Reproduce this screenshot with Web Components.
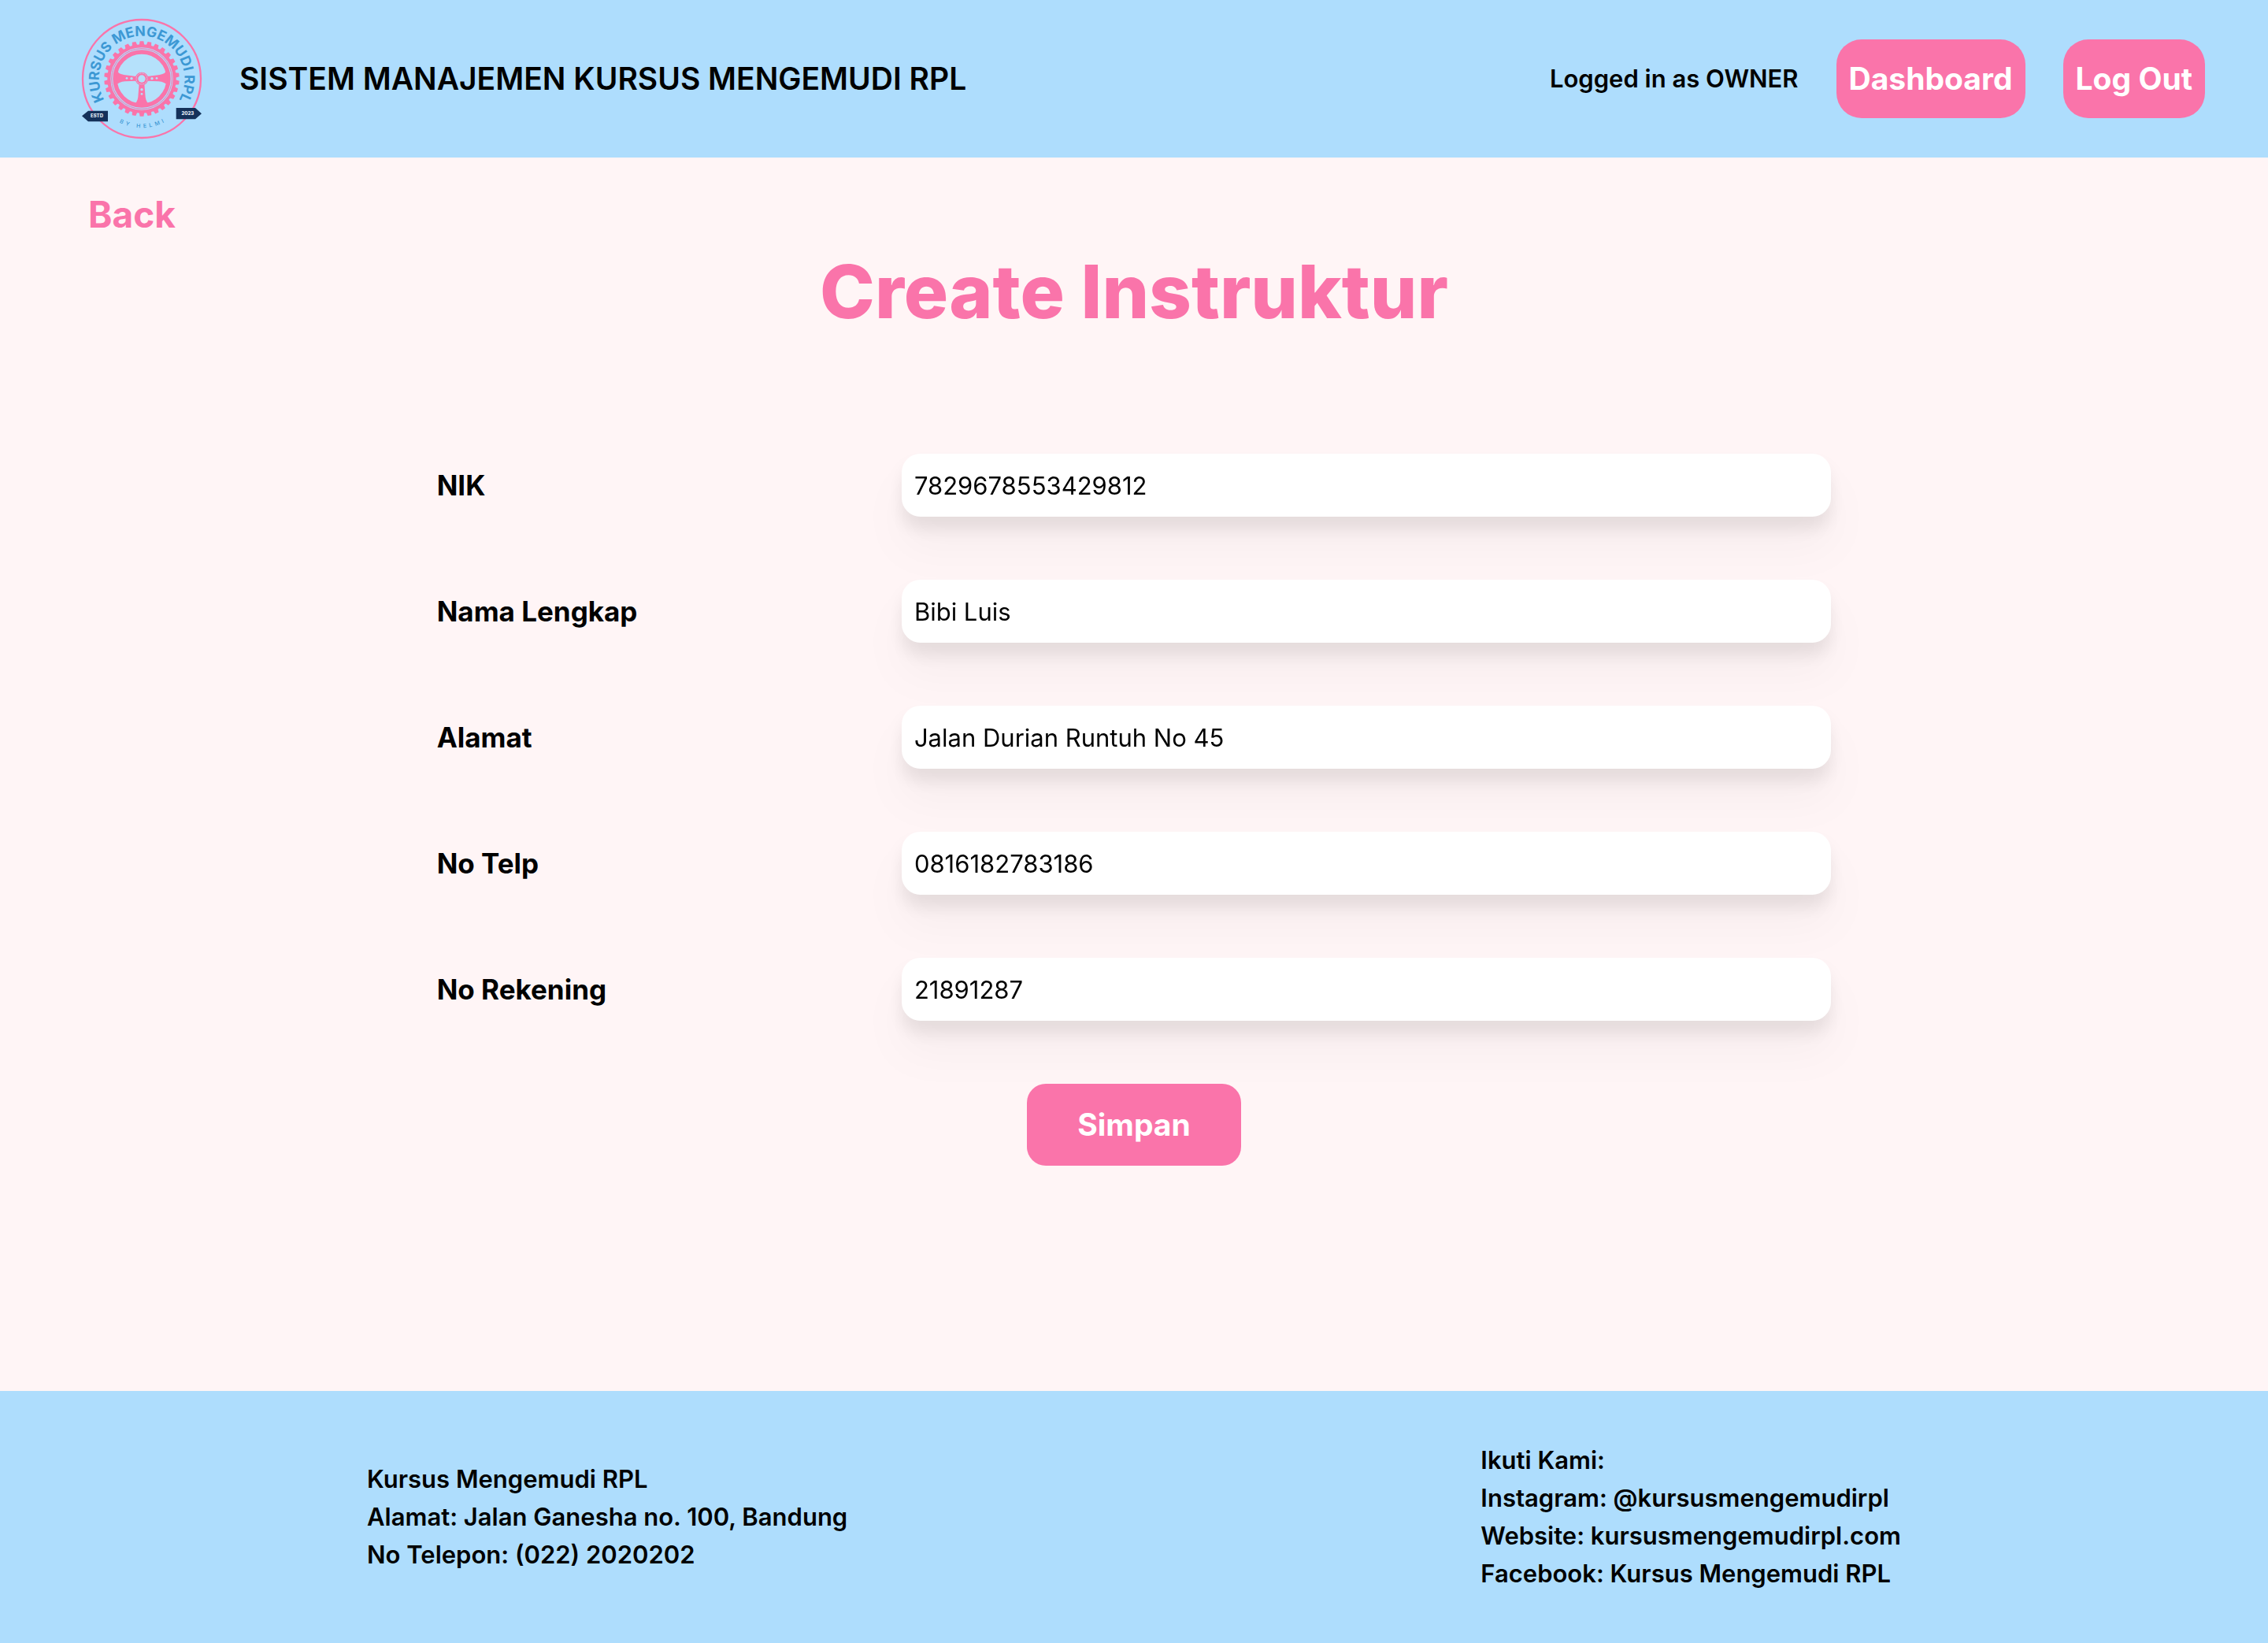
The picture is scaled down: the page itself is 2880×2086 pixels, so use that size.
<!DOCTYPE html>
<html lang="id">
<head>
<meta charset="utf-8">
<meta name="viewport" content="width=device-width, initial-scale=1">
<title>Create Instruktur</title>
<style>
  :root {
    --sky: #aeddfd;
    --blush: #fff5f6;
    --pink: #fa74aa;
  }
  body {
    margin: 0;
    background: var(--blush);
    color: #000;
    font-family: Inter, "Liberation Sans", sans-serif;
    font-size: 32px;
    line-height: 48px;
  }
</style>
</head>
<body>
<driving-app></driving-app>

<script>
class BaseElement extends HTMLElement {
  connectedCallback() {
    if (this.shadowRoot) return;
    this.attachShadow({ mode: "open" }).innerHTML = this.render();
  }
}

customElements.define("brand-logo", class extends BaseElement {
  render() {
    let teeth = "";
    for (let i = 0; i < 30; i++) {
      teeth += `<path d="M260 142 L263 127 H277 L280 142 Z" transform="rotate(${i * 12} 270 270)"/>`;
    }
    return `
      <style>
        :host { display: block; flex: none; width: 152px; height: 152px; }
        svg { display: block; width: 100%; height: 100%; overflow: visible; }
      </style>
      <svg viewBox="42 42 456 456" role="img" aria-label="Kursus Mengemudi RPL">
        <defs>
          <path id="upper" d="M270 433 A163 163 0 0 1 270 107 A163 163 0 0 1 270 433"/>
          <path id="lower" d="M83 270 A187 187 0 0 0 457 270"/>
        </defs>
        <circle cx="270" cy="270" r="225" fill="none" stroke="#fa74aa" stroke-width="7"/>
        <g fill="#fa74aa">${teeth}</g>
        <circle cx="270" cy="270" r="125" fill="none" stroke="#fa74aa" stroke-width="12"/>
        <circle cx="270" cy="270" r="115" fill="none" stroke="#fa74aa" stroke-width="3"/>
        <circle cx="270" cy="270" r="102" fill="#b5e1fb" stroke="#fa74aa" stroke-width="16"/>
        <g fill="#fa74aa">
          <path d="M172 232 Q178 252 202 255 L248 261 V278 L206 280 Q182 282 171 296 Z"/>
          <path d="M368 232 Q362 252 338 255 L292 261 V278 L334 280 Q358 282 369 296 Z"/>
          <path d="M260 290 H280 L284 340 Q286 360 302 371 H238 Q254 360 256 340 Z"/>
          <circle cx="270" cy="270" r="25"/>
        </g>
        <circle cx="270" cy="270" r="21" fill="none" stroke="#b5e1fb" stroke-width="2" stroke-dasharray="9 2"/>
        <g fill="#b5e1fb">
          <circle cx="270" cy="270" r="14"/>
          <circle cx="213" cy="268" r="4"/><circle cx="231" cy="269" r="5"/>
          <circle cx="327" cy="268" r="4"/><circle cx="309" cy="269" r="5"/>
          <circle cx="270" cy="311" r="5"/><circle cx="270" cy="328" r="4"/>
        </g>
        <g font-family="Inter, sans-serif" fill="#3c98d4">
          <text font-size="53" font-weight="700" text-anchor="middle"><textPath href="#upper" startOffset="50%">KURSUS MENGEMUDI RPL</textPath></text>
          <text font-size="21" font-weight="500" text-anchor="middle"><textPath href="#lower" startOffset="50%">B &#160;Y &#160; &#160; H &#160;E &#160;L &#160;M &#160;I</textPath></text>
        </g>
        <g fill="#14315a">
          <path d="M42 412 L66 392 H141 V433 H66 Z"/>
          <path d="M498 403 L474 381 H401 V424 H474 Z"/>
        </g>
        <g font-family="Inter, sans-serif" font-weight="800" font-size="18" fill="#e6eef8" text-anchor="middle">
          <text x="99" y="418">ESTD</text>
          <text x="445" y="409">2023</text>
        </g>
      </svg>`;
  }
});

customElements.define("site-header", class extends BaseElement {
  render() {
    return `
      <style>
        :host { display: block; background: var(--sky); }
        header { display: flex; align-items: center; gap: 48px; min-height: 200px; padding: 0 80px 0 104px; box-sizing: border-box; }
        .title { flex: 1; font-size: 39px; font-weight: 600; }
        .user { font-size: 31px; font-weight: 600; }
        nav { display: flex; align-items: center; gap: 48px; }
        a, button {
          box-sizing: border-box; height: 100px; padding: 0 16px; border: 0; border-radius: 32px;
          background: var(--pink); color: #fff; font: inherit; font-size: 39px; font-weight: 700;
          line-height: 100px; text-decoration: none; cursor: pointer;
        }
      </style>
      <header>
        <brand-logo></brand-logo>
        <div class="title">SISTEM MANAJEMEN KURSUS MENGEMUDI RPL</div>
        <nav>
          <span class="user">Logged in as <slot></slot></span>
          <a href="#dashboard">Dashboard</a>
          <button type="button">Log Out</button>
        </nav>
      </header>`;
  }
});

customElements.define("form-field", class extends BaseElement {
  render() {
    const name = this.getAttribute("name");
    return `
      <style>
        :host { display: grid; grid-template-columns: 1fr 2fr; align-items: center; }
        label { font-size: 35px; font-weight: 700; }
        input {
          box-sizing: border-box; width: 100%; height: 80px; padding: 0 16px; border: 0; border-radius: 24px;
          background: #fff; color: #000; font: inherit; font-size: 31px;
          filter: drop-shadow(0 40px 26px rgb(0 0 0 / .03)) drop-shadow(0 16px 10px rgb(0 0 0 / .08));
        }
      </style>
      <label for="${name}"><slot></slot></label>
      <input id="${name}" name="${name}" type="text" value="${this.getAttribute("value")}">`;
  }
});

customElements.define("instructor-form", class extends BaseElement {
  render() {
    return `
      <style>
        :host { display: block; }
        form { display: flex; flex-direction: column; gap: 80px; width: 66.667%; margin: 0 auto; }
        button {
          align-self: center; height: 104px; padding: 0 64px; border: 0; border-radius: 24px;
          background: var(--pink); color: #fff; font: inherit; font-size: 39px; font-weight: 700; cursor: pointer;
        }
      </style>
      <form>
        <form-field name="nik" value="7829678553429812">NIK</form-field>
        <form-field name="nama" value="Bibi Luis">Nama Lengkap</form-field>
        <form-field name="alamat" value="Jalan Durian Runtuh No 45">Alamat</form-field>
        <form-field name="telp" value="0816182783186">No Telp</form-field>
        <form-field name="rekening" value="21891287">No Rekening</form-field>
        <button type="submit">Simpan</button>
      </form>`;
  }
});

customElements.define("site-footer", class extends BaseElement {
  render() {
    return `
      <style>
        :host { display: block; background: var(--sky); }
        footer {
          display: flex; align-items: center; justify-content: space-around; box-sizing: border-box;
          min-height: 320px; padding: 64px; font-size: 31px; font-weight: 600;
        }
        p { margin: 0; }
      </style>
      <footer>
        <div>
          <p>Kursus Mengemudi RPL</p>
          <p>Alamat: Jalan Ganesha no. 100, Bandung</p>
          <p>No Telepon: (022) 2020202</p>
        </div>
        <div>
          <p>Ikuti Kami:</p>
          <p>Instagram: @kursusmengemudirpl</p>
          <p>Website: kursusmengemudirpl.com</p>
          <p>Facebook: Kursus Mengemudi RPL</p>
        </div>
      </footer>`;
  }
});

customElements.define("driving-app", class extends BaseElement {
  render() {
    return `
      <style>
        :host { display: flex; flex-direction: column; min-height: 100vh; }
        main { flex: 1; padding: 40px 112px 0; }
        .back { display: block; width: fit-content; color: var(--pink); font-size: 46px; font-weight: 700; line-height: 64px; text-decoration: none; }
        h1 { margin: 16px 0 156px; color: var(--pink); font-size: 94px; font-weight: 800; line-height: 100px; text-align: center; }
      </style>
      <site-header>OWNER</site-header>
      <main>
        <a class="back" href="#back">Back</a>
        <h1>Create Instruktur</h1>
        <instructor-form></instructor-form>
      </main>
      <site-footer></site-footer>`;
  }
});
</script>
</body>
</html>
